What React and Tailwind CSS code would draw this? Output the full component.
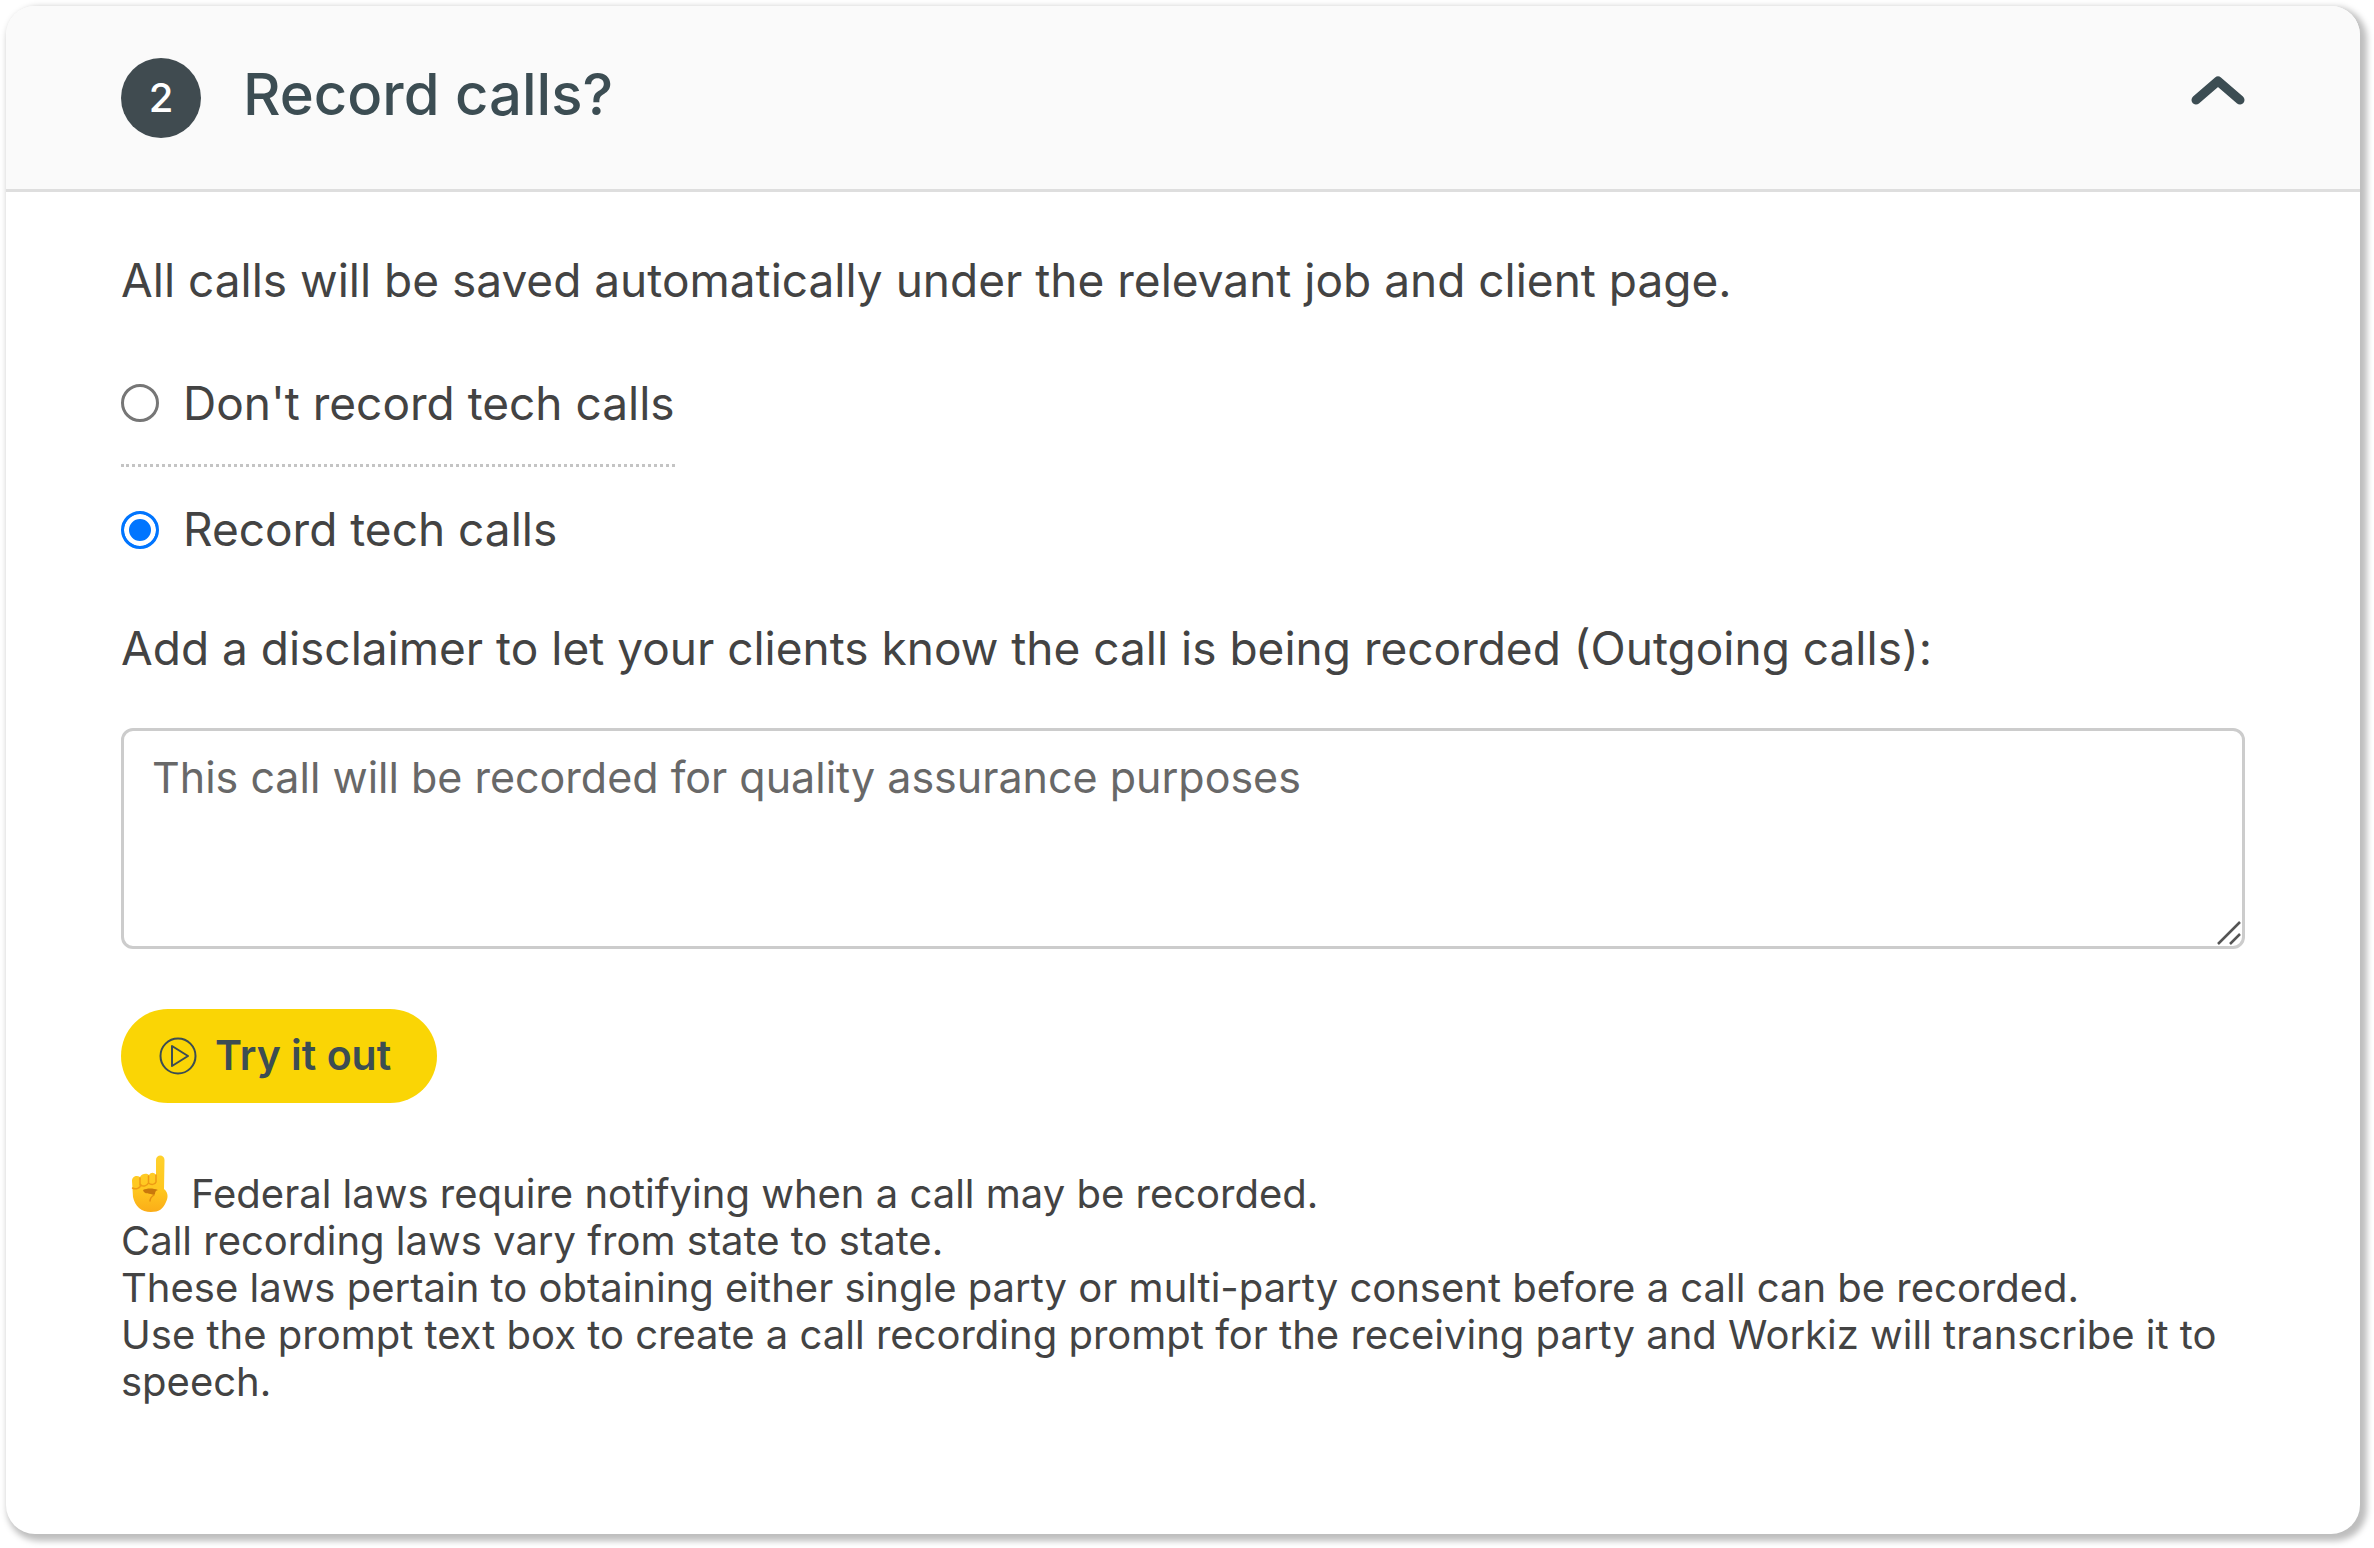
import React, { useState } from "react";

const recordOptions = [
  { value: "off", label: "Don't record tech calls" },
  { value: "on", label: "Record tech calls" },
];

const ChevronUp = () => (
  <svg width="54" height="30" viewBox="0 0 54 30" fill="none" aria-hidden="true">
    <path
      d="M5 25L27 6L49 25"
      stroke="#3c4d53"
      strokeWidth="9"
      strokeLinecap="round"
      strokeLinejoin="round"
    />
  </svg>
);

const PlayCircle = () => (
  <svg width="38" height="38" viewBox="0 0 38 38" fill="none" stroke="#3c4d53" strokeWidth="2" aria-hidden="true">
    <circle cx="19" cy="19" r="17.500" />
    <path d="M13 9L29 19L13 29Z" strokeLinejoin="round" />
  </svg>
);

const PointingHand = () => (
  <svg className="mb-1" width="38" height="58" viewBox="0 0 38 58" role="img" aria-label="Note">
    <defs>
      <linearGradient id="skin" x1="0" y1="0" x2="0" y2="1">
        <stop offset="0" stopColor="#ffd12c" />
        <stop offset="0.600" stopColor="#ffc71f" />
        <stop offset="1" stopColor="#fbad18" />
      </linearGradient>
    </defs>
    <path
      d="M25 5C25 -1 33.500 -1 33.500 5L33 34C37 37 37.500 42 35 47C32 54 28 57 20 57C10 57 4 51 2 42L1 26C1 21 6 20 9 22C11 18 16 18 18 20C20 17 23 17 25 20Z"
      fill="url(#skin)"
    />
    <path
      d="M9 23V30M17.500 21V28M25 20V27M1.500 33C5 35 9 33 10 30C12 32 16 31 17.500 28C20 30 24 30 25 27"
      stroke="#ee9a14"
      strokeWidth="1.500"
      fill="none"
      strokeLinecap="round"
    />
    <path d="M12 35C16 33 22 33 27 35C23 36 25 39 23 40C19 38 13 40 12 35Z" fill="#c9780c" />
    <path d="M23 40C20 42 19 44 19 46" stroke="#e58f12" strokeWidth="1.500" fill="none" strokeLinecap="round" />
  </svg>
);

const App = () => {
  const [open, setOpen] = useState(true);
  const [recording, setRecording] = useState("on");
  const [disclaimer, setDisclaimer] = useState("");

  return (
    <div className="min-h-screen bg-white pt-1.5 pl-1.5 pr-3.5 pb-3.5 font-[Inter,sans-serif] text-[#434343]">
      <section className="overflow-hidden rounded-[29px] bg-white pb-[129px] shadow-[4px_4px_6px_3px_rgba(0,0,0,0.26)]">
        <header className="flex h-[186px] items-center justify-between border-b-3 border-[#dedede] bg-[#fafafa] px-[115px]">
          <div className="flex items-center gap-[42px]">
            <span className="flex size-20 items-center justify-center rounded-full bg-[#404b50] text-[40px] font-medium text-white">
              2
            </span>
            <h2 className="pb-1.5 text-[58px] font-medium text-[#3c4d53]">Record calls?</h2>
          </div>
          <button type="button" className="pb-4" aria-label="Toggle section" aria-expanded={open} onClick={() => setOpen(!open)}>
            <ChevronUp />
          </button>
        </header>

        {open && (
          <div className="px-[115px] pt-[56px]">
            <p className="text-[46px] leading-[64px]">
              All calls will be saved automatically under the relevant job and client page.
            </p>

            <div className="mt-[30px] flex flex-col items-start">
              {recordOptions.map((option) => (
                <label
                  key={option.value}
                  className="flex h-[125px] items-center gap-6 border-dotted border-[#c4c4c4] text-[46px] first:border-b-3"
                >
                  <input
                    type="radio"
                    name="recording"
                    value={option.value}
                    checked={recording === option.value}
                    onChange={() => setRecording(option.value)}
                    className="size-[38px] appearance-none rounded-full border-3 border-[#767676] bg-white checked:border-[#0075ff] checked:bg-[#0075ff] checked:shadow-[inset_0_0_0_5px_#fff]"
                  />
                  {option.label}
                </label>
              ))}
            </div>

            <label htmlFor="disclaimer" className="mt-6 block text-[46px] leading-[64px]">
              Add a disclaimer to let your clients know the call is being recorded (Outgoing calls):
            </label>
            <div className="relative mt-[48px]">
              <textarea
                id="disclaimer"
                value={disclaimer}
                onChange={(e) => setDisclaimer(e.target.value)}
                placeholder="This call will be recorded for quality assurance purposes"
                className="block h-[221px] w-full resize-none rounded-xl border-3 border-[#cccccc] px-[28px] py-[14px] text-[43px] leading-[64px] placeholder:text-[#686868]"
              />
              <svg className="absolute bottom-1 right-1" width="24" height="24" viewBox="0 0 24 24" stroke="#555555" strokeWidth="2.500" aria-hidden="true">
                <path d="M1 23L23 1M13 23L23 13" />
              </svg>
            </div>

            <button
              type="button"
              className="mt-[60px] flex h-[94px] items-center gap-[18px] rounded-full bg-[#fad505] pr-[46px] pl-[38px] text-[41px] font-semibold text-[#3c4d53]"
            >
              <PlayCircle />
              Try it out
            </button>

            <div className="mt-[52px] text-[40px] leading-[47px]">
              <p className="flex items-end gap-[22px] pl-2.5">
                <PointingHand />
                Federal laws require notifying when a call may be recorded.
              </p>
              <p>Call recording laws vary from state to state.</p>
              <p>These laws pertain to obtaining either single party or multi-party consent before a call can be recorded.</p>
              <p>
                Use the prompt text box to create a call recording prompt for the receiving party and Workiz will transcribe it to speech.
              </p>
            </div>
          </div>
        )}
      </section>
    </div>
  );
};

export default App;
